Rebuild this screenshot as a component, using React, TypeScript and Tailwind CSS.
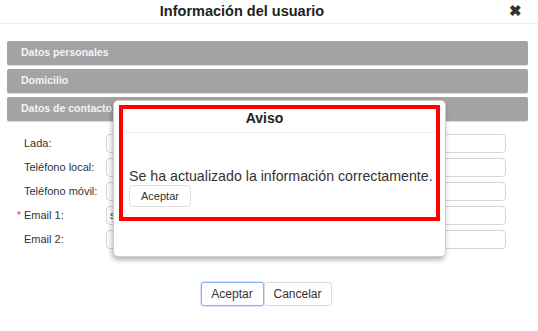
import React from "react";

const rows: { label: string; req?: boolean; value?: string }[] = [
  { label: "Lada:" },
  { label: "Teléfono local:" },
  { label: "Teléfono móvil:" },
  { label: "Email 1:", req: true, value: "s" },
  { label: "Email 2:" },
];

export default function App() {
  return (
    <div
      className="relative w-[538px] h-[331px] bg-white overflow-hidden text-[#333]"
      style={{ fontFamily: '"Liberation Sans", Arial, sans-serif' }}
    >
      {/* Header */}
      <div className="relative h-[24px] border-b border-[#ececec] flex items-center justify-center pr-[54px]">
        <span className="text-[14.5px] font-bold text-[#222] leading-none">Información del usuario</span>
        <span className="absolute right-[16px] top-[3px] text-[15px] font-bold text-[#333] leading-none">✖</span>
      </div>

      {/* Accordion */}
      <div className="flex flex-col gap-[4px] ml-[7px] mr-[10px] mt-[17px]">
        {["Datos personales", "Domicilio", "Datos de contacto"].map((t) => (
          <div
            key={t}
            className="h-[24px] bg-[#a3a3a3] rounded-[2px] flex items-center pl-[14px] text-[10.5px] font-bold text-[#f4f4f4] shadow-[0_1px_1px_rgba(0,0,0,0.15)]"
          >
            {t}
          </div>
        ))}
      </div>

      {/* Form */}
      <div className="flex flex-col gap-[5px] mt-[13px] ml-[17px] mr-[32px]">
        {rows.map((r) => (
          <div key={r.label} className="flex items-center h-[19px]">
            <div className="w-[89px] flex items-center text-[11px] text-[#333]">
              <span className="w-[7px] text-[#e33] text-[10px]">{r.req ? "*" : ""}</span>
              <span>{r.label}</span>
            </div>
            <div className="flex-1 h-[19px] border border-[#d4d4d4] rounded-[4px] bg-white flex items-center pl-[3px] text-[11px] text-[#333]">
              {r.value ?? ""}
            </div>
          </div>
        ))}
      </div>

      {/* Bottom buttons */}
      <div className="flex justify-center mt-[33px] pr-[6px]">
        <button className="w-[63px] h-[24px] border border-[#8ab4f8] rounded-[3px] bg-white text-[12px] text-[#333] shadow-[0_0_0_1px_rgba(138,180,248,0.35)]">
          Aceptar
        </button>
        <button className="w-[68px] h-[24px] border border-[#dcdcdc] rounded-[3px] bg-white text-[12px] text-[#333]">
          Cancelar
        </button>
      </div>

      {/* Dialog overlay */}
      <div className="absolute left-[113px] top-[100px] w-[333px] h-[157px] bg-white border border-[#cfcfcf] rounded-[5px] shadow-[-1px_3px_5px_rgba(0,0,0,0.3)] pt-[4px] px-[5px]">
        <div className="h-[116px] border-[4px] border-[#ff0000] flex flex-col">
          <div className="h-[24px] flex items-center justify-center pr-[30px] pb-[4px] border-b border-[#eeeeee] text-[14px] font-bold text-[#222]">
            Aviso
          </div>
          <div className="flex flex-col items-start pl-[6px] pt-[35px]">
            <div className="text-[14.2px] leading-[16px] text-[#333] whitespace-nowrap">
              Se ha actualizado la información correctamente.
            </div>
            <button className="mt-[1px] w-[62px] h-[22px] border border-[#dedede] rounded-[4px] bg-white text-[11px] text-[#333]">
              Aceptar
            </button>
          </div>
        </div>
      </div>
    </div>
  );
}
